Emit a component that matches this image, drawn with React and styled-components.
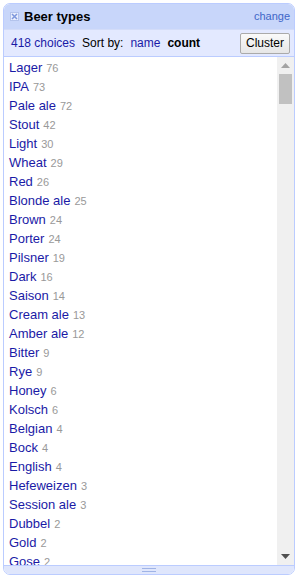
import React from "react";
import styled, { createGlobalStyle } from "styled-components";

const Global = createGlobalStyle`
  html, body { margin: 0; padding: 0; background: #fff; }
  body { font-family: Arial, "Liberation Sans", sans-serif; }
`;

const Facet = styled.div`
  margin: 3px 0 0 3px;
  width: 290px;
  border: 1px solid #bcf;
  border-radius: 7px;
  overflow: hidden;
  background: #fff;
`;

const TitleBar = styled.div`
  height: 25px;
  background: #c8d6fa;
  display: flex;
  align-items: center;
  padding: 0 4px 0 6px;
  gap: 5px;
`;

const Remove = styled.span`
  width: 9px;
  height: 9px;
  background: #e9eefc;
  border: 1px solid #b3c3ec;
  box-sizing: border-box;
  display: inline-flex;
  align-items: center;
  justify-content: center;
  margin-top: -1px;
`;

const Title = styled.span`
  flex: 1;
  font-size: 13px;
  font-weight: bold;
  color: #000;
`;

const Change = styled.a`
  font-size: 11px;
  color: #4066c8;
  margin-top: -2px;
`;

const Controls = styled.div`
  height: 26px;
  background: #e3e9ff;
  border-top: 1px solid #d3dcf8;
  border-bottom: 1px solid #bcf;
  display: flex;
  align-items: center;
  padding: 0 4px 0 7px;
  font-size: 12px;
`;

const Choices = styled.span`
  color: #1a1aa6;
  margin-right: 7px;
`;

const SortLabel = styled.span`
  color: #000;
  margin-right: 7px;
`;

const SortOpt = styled.span`
  color: ${(p) => (p.$active ? "#000" : "#1a1aa6")};
  font-weight: ${(p) => (p.$active ? "bold" : "normal")};
  margin-right: 7px;
`;

const Spacer = styled.span`
  flex: 1;
`;

const ClusterBtn = styled.button`
  font-family: Arial, "Liberation Sans", sans-serif;
  font-size: 12px;
  color: #000;
  height: 21px;
  padding: 0 5px;
  background: linear-gradient(#fafafa, #e6e6e6);
  border: 1px solid #aaa;
  border-radius: 2px;
`;

const ListWrap = styled.div`
  height: 508px;
  display: flex;
  background: #fff;
`;

const List = styled.div`
  flex: 1;
  padding: 0 0 0 5px;
  overflow: hidden;
`;

const Row = styled.div`
  height: 19px;
  line-height: 19px;
  white-space: nowrap;
`;

const Name = styled.span`
  font-size: 13px;
  color: #1a1aa6;
`;

const Count = styled.span`
  font-size: 11px;
  color: #999;
  margin-left: 4px;
`;

const Scrollbar = styled.div`
  width: 17px;
  background: #f0f0f0;
  display: flex;
  flex-direction: column;
  align-items: center;
`;

const Arrow = styled.div`
  height: 17px;
  display: flex;
  align-items: center;
  justify-content: center;
`;

const Thumb = styled.div`
  width: 13px;
  height: 30px;
  background: #c1c1c1;
`;

const Track = styled.div`
  flex: 1;
`;

const Footer = styled.div`
  height: 8px;
  background: #dfe6fc;
  border-top: 1px solid #bcf;
  display: flex;
  align-items: center;
  justify-content: center;
`;

const Grip = styled.div`
  width: 14px;
  height: 2px;
  border-top: 1px solid #9fb3e6;
  border-bottom: 1px solid #9fb3e6;
`;

const items = [
  ["Lager", 76], ["IPA", 73], ["Pale ale", 72], ["Stout", 42], ["Light", 30],
  ["Wheat", 29], ["Red", 26], ["Blonde ale", 25], ["Brown", 24], ["Porter", 24],
  ["Pilsner", 19], ["Dark", 16], ["Saison", 14], ["Cream ale", 13], ["Amber ale", 12],
  ["Bitter", 9], ["Rye", 9], ["Honey", 6], ["Kolsch", 6], ["Belgian", 4],
  ["Bock", 4], ["English", 4], ["Hefeweizen", 3], ["Session ale", 3], ["Dubbel", 2],
  ["Gold", 2], ["Gose", 2],
];

export default function App() {
  return (
    <>
      <Global />
      <Facet>
        <TitleBar>
          <Remove>
            <svg width="7" height="7" viewBox="0 0 7 7">
              <path d="M1 1 L6 6 M6 1 L1 6" stroke="#7d97dc" strokeWidth="1.5" />
            </svg>
          </Remove>
          <Title>Beer types</Title>
          <Change>change</Change>
        </TitleBar>
        <Controls>
          <Choices>418 choices</Choices>
          <SortLabel>Sort by:</SortLabel>
          <SortOpt>name</SortOpt>
          <SortOpt $active>count</SortOpt>
          <Spacer />
          <ClusterBtn>Cluster</ClusterBtn>
        </Controls>
        <ListWrap>
          <List>
            {items.map(([n, c]) => (
              <Row key={n}>
                <Name>{n}</Name>
                <Count>{c}</Count>
              </Row>
            ))}
          </List>
          <Scrollbar>
            <Arrow>
              <svg width="9" height="5" viewBox="0 0 9 5"><path d="M0 5 L4.5 0 L9 5 Z" fill="#a3a3a3" /></svg>
            </Arrow>
            <Thumb />
            <Track />
            <Arrow>
              <svg width="9" height="5" viewBox="0 0 9 5"><path d="M0 0 L4.5 5 L9 0 Z" fill="#505050" /></svg>
            </Arrow>
          </Scrollbar>
        </ListWrap>
        <Footer>
          <Grip />
        </Footer>
      </Facet>
    </>
  );
}
